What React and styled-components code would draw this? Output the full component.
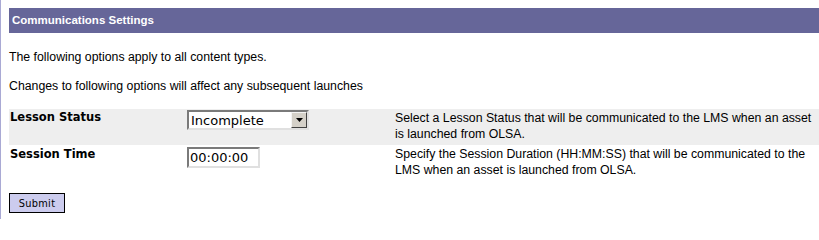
import React from "react";
import styled, { createGlobalStyle } from "styled-components";

const Global = createGlobalStyle`
  html, body { margin: 0; padding: 0; background: #ffffff; }
  body { border-left: 1px solid #a9a9d4; min-height: 219px; box-sizing: border-box; }
`;

const Page = styled.div`
  padding: 8px 0 0 8px;
  font-family: "Liberation Sans", Arial, sans-serif;
  font-size: 12.3px;
  color: #000;
`;

const Header = styled.div`
  background: #666699;
  color: #fff;
  font-family: "Liberation Sans", Arial, sans-serif;
  font-weight: bold;
  font-size: 11.5px;
  height: 25px;
  line-height: 25px;
  padding-left: 3px;
`;

const Intro = styled.p`
  margin: ${(p) => p.$top}px 0 0 0;
  line-height: 14px;
`;

const Table = styled.div`
  margin-top: 16px;
  display: grid;
  grid-template-columns: 178px 208px 1fr;
`;

const Row = styled.div`
  display: contents;
  & > * { background: ${(p) => (p.$shade ? "#eeeeee" : "transparent")}; }
`;

const Label = styled.div`
  font-family: "DejaVu Sans", Verdana, sans-serif;
  font-weight: bold;
  font-size: 11.5px;
  padding: ${(p) => p.$pt}px 0 0 1px;
  height: ${(p) => p.$h}px;
  box-sizing: border-box;
`;

const Cell = styled.div`
  padding-top: 1px;
`;

const Desc = styled.div`
  line-height: 16px;
  padding-top: 1px;
`;

const SelectBox = styled.div`
  display: flex;
  align-items: center;
  width: 122px;
  height: 20px;
  box-sizing: border-box;
  border: 2px solid;
  border-color: #7a7a7a #e0e0e0 #e0e0e0 #7a7a7a;
  background: #fff;
  font-family: "DejaVu Sans", Verdana, sans-serif;
  font-size: 13px;
`;

const SelectText = styled.span`
  flex: 1;
  padding-left: 2px;
`;

const Arrow = styled.span`
  width: 16px;
  height: 16px;
  box-sizing: border-box;
  background: #d4d0c8;
  border: 1px solid;
  border-color: #f4f4f4 #404040 #404040 #f4f4f4;
  display: flex;
  align-items: center;
  justify-content: center;
`;

const TextInput = styled.input`
  display: block;
  width: 73px;
  height: 21px;
  box-sizing: border-box;
  border: 2px solid;
  border-color: #7a7a7a #e0e0e0 #e0e0e0 #7a7a7a;
  font-family: "DejaVu Sans", Verdana, sans-serif;
  font-size: 13px;
  padding: 0 1px;
  margin: 1px 0 0 0;
  outline: none;
`;

const Button = styled.button`
  display: block;
  margin-top: 13px;
  width: 56px;
  height: 20px;
  background: #ccccee;
  border: 1px solid #000;
  font-family: "DejaVu Sans", Verdana, sans-serif;
  font-size: 9.8px;
  padding: 0;
  letter-spacing: 0.3px;
`;

export default function App() {
  return (
    <>
      <Global />
      <Page>
        <Header>Communications Settings</Header>
        <Intro $top={17}>The following options apply to all content types.</Intro>
        <Intro $top={15}>Changes to following options will affect any subsequent launches</Intro>
        <Table>
          <Row $shade>
            <Label $h={36} $pt={1}>Lesson Status</Label>
            <Cell>
              <SelectBox>
                <SelectText>Incomplete</SelectText>
                <Arrow>
                  <svg width="7" height="4" viewBox="0 0 7 4">
                    <path d="M0 0h7L3.5 4z" fill="#000" />
                  </svg>
                </Arrow>
              </SelectBox>
            </Cell>
            <Desc>Select a Lesson Status that will be communicated to the LMS when an asset is launched from OLSA.</Desc>
          </Row>
          <Row>
            <Label $h={35} $pt={2}>Session Time</Label>
            <Cell>
              <TextInput defaultValue="00:00:00" />
            </Cell>
            <Desc>Specify the Session Duration (HH:MM:SS) that will be communicated to the LMS when an asset is launched from OLSA.</Desc>
          </Row>
        </Table>
        <Button>Submit</Button>
      </Page>
    </>
  );
}
